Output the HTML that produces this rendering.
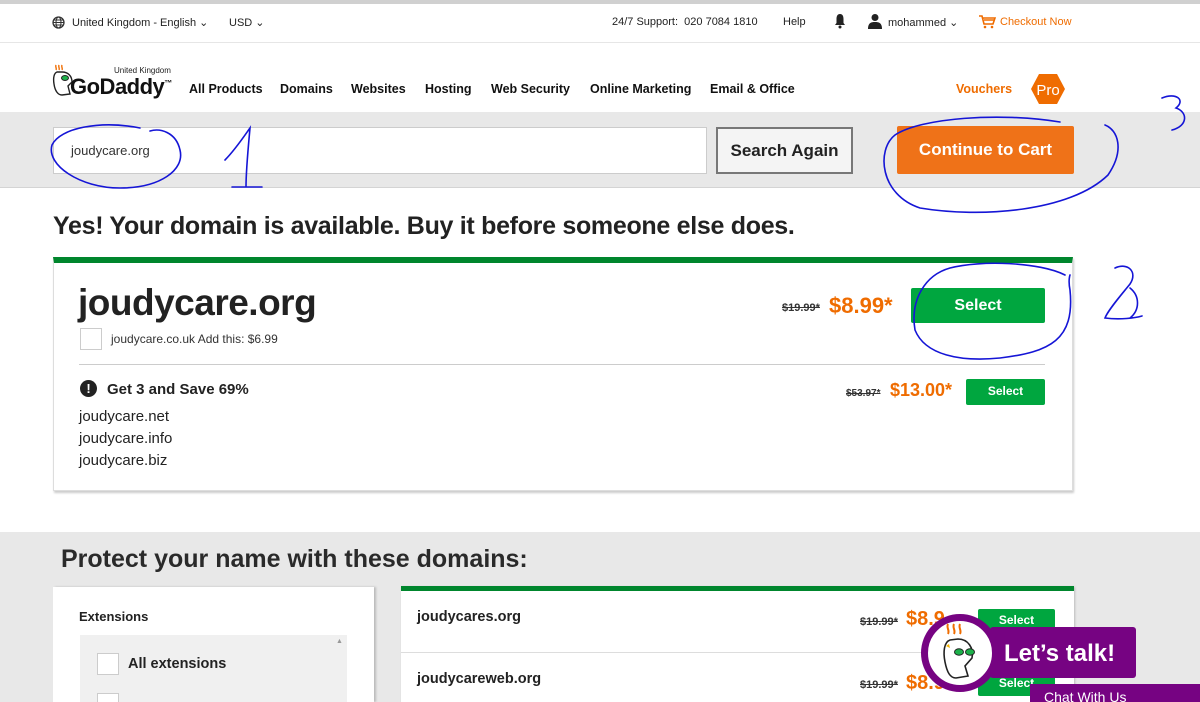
<!DOCTYPE html>
<html><head><meta charset="utf-8"><style>
*{margin:0;padding:0;box-sizing:border-box}
html,body{width:1200px;height:702px;overflow:hidden}
body{background:#fff;font-family:"Liberation Sans",Arial,sans-serif;color:#111;position:relative}
.a{position:absolute}
.b{font-weight:bold}
.btn{background:#00a63f;color:#fff;font-weight:bold;text-align:center;border-radius:2px}
.strike{text-decoration:line-through;font-weight:bold;color:#333}
.price{color:#ef6c00;font-weight:bold}
</style></head><body>
<div class="a" style="left:0;top:0;width:1200px;height:4px;background:#d0d0d0"></div>
<div class="a" style="left:0;top:42px;width:1200px;height:1px;background:#e6e6e6"></div>
<svg class="a" style="left:52px;top:16px" width="13" height="13" viewBox="0 0 13 13"><circle cx="6.5" cy="6.5" r="5.5" fill="none" stroke="#333" stroke-width="1.3"/><ellipse cx="6.5" cy="6.5" rx="2.5" ry="5.5" fill="none" stroke="#333" stroke-width="1"/><path d="M1 6.5H12M2 4H11M2 9H11" stroke="#333" stroke-width="1"/></svg>
<div class="a" style="left:72px;top:16px;font-size:11px;color:#222">United Kingdom - English ⌄</div>
<div class="a" style="left:229px;top:16px;font-size:11px;color:#222">USD ⌄</div>
<div class="a" style="left:612px;top:16px;font-size:11px;color:#222">24/7 Support:&nbsp; 020 7084 1810</div>
<div class="a" style="left:783px;top:16px;font-size:11px;color:#222">Help</div>
<svg class="a" style="left:834px;top:13px" width="12" height="16" viewBox="0 0 12 16"><path d="M6 1C3 1 2.5 4 2.5 6V10L1 12H11L9.5 10V6C9.5 4 9 1 6 1Z" fill="#222"/><circle cx="6" cy="14" r="1.5" fill="#222"/></svg>
<svg class="a" style="left:868px;top:13px" width="14" height="16" viewBox="0 0 14 16"><circle cx="7" cy="4.5" r="3.5" fill="#222"/><path d="M0 16C0 10 3 9 7 9S14 10 14 16Z" fill="#222"/></svg>
<div class="a" style="left:888px;top:16px;font-size:11px;color:#222">mohammed ⌄</div>
<svg class="a" style="left:979px;top:15px" width="17" height="14" viewBox="0 0 17 14"><path d="M0 1H3L5 9H14L16 3H4" fill="none" stroke="#ef6c00" stroke-width="1.6"/><path d="M5 5H15" stroke="#ef6c00" stroke-width="1.5"/><circle cx="6" cy="12" r="1.3" fill="#ef6c00"/><circle cx="13" cy="12" r="1.3" fill="#ef6c00"/></svg>
<div class="a" style="left:1000px;top:16px;font-size:11px;color:#ef6c00">Checkout Now</div>
<div class="a" style="left:114px;top:66px;font-size:8px;color:#222">United Kingdom</div>
<svg class="a" style="left:52px;top:64px" width="22" height="34" viewBox="0 0 22 34"><path d="M4 1C3 3 5 4 4 6M7 1C6 3 8 4 7 6M10 1C9 3 11 4 10 6" stroke="#ef6c00" stroke-width="1.4" fill="none"/><path d="M5 8C2 9 1 14 2 20C3 27 6 31 10 31L18 30L16 22L20 18C20 12 16 8 10 8Z" fill="#fff" stroke="#222" stroke-width="1.4"/><ellipse cx="13" cy="14" rx="3.5" ry="2.5" fill="#1db14b" stroke="#222"/></svg>
<div class="a b" style="left:70px;top:74px;font-size:22px;color:#111;letter-spacing:-0.5px">GoDaddy<sup style="font-size:8px">™</sup></div>
<div class="a b" style="left:189px;top:82px;font-size:12.5px">All Products</div>
<div class="a b" style="left:280px;top:82px;font-size:12.5px">Domains</div>
<div class="a b" style="left:351px;top:82px;font-size:12.5px">Websites</div>
<div class="a b" style="left:425px;top:82px;font-size:12.5px">Hosting</div>
<div class="a b" style="left:491px;top:82px;font-size:12.5px">Web Security</div>
<div class="a b" style="left:590px;top:82px;font-size:12.5px">Online Marketing</div>
<div class="a b" style="left:710px;top:82px;font-size:12.5px">Email &amp; Office</div>
<div class="a b" style="left:956px;top:82px;font-size:12.5px;color:#ef6c00">Vouchers</div>
<svg class="a" style="left:1030px;top:73px" width="36" height="32" viewBox="0 0 36 32"><path d="M9 1H27L35 16L27 31H9L1 16Z" fill="#ef6c00"/><text x="18" y="22" font-family="Liberation Sans" font-size="15" fill="#fff" text-anchor="middle">Pro</text></svg>
<div class="a" style="left:0;top:112px;width:1200px;height:76px;background:#e8e8e8;border-bottom:1px solid #d4d4d4"></div>
<div class="a" style="left:53px;top:127px;width:654px;height:47px;background:#fff;border:1px solid #ccc"></div>
<div class="a" style="left:71px;top:143px;font-size:13px;color:#333">joudycare.org</div>
<div class="a b" style="left:716px;top:127px;width:137px;height:47px;border:2px solid #777;background:#f4f4f4;font-size:17px;line-height:43px;text-align:center;color:#222">Search Again</div>
<div class="a b" style="left:897px;top:126px;width:177px;height:48px;background:#ef7218;color:#fff;font-size:17px;line-height:48px;text-align:center;border-radius:2px">Continue to Cart</div>
<div class="a b" style="left:53px;top:212px;font-size:25px;color:#222;letter-spacing:-0.3px">Yes! Your domain is available. Buy it before someone else does.</div>
<div class="a" style="left:53px;top:257px;width:1020px;height:234px;background:#fff;border:1px solid #ddd;border-top:6px solid #00862d;box-shadow:1px 2px 2px #ccc"></div>
<div class="a b" style="left:78px;top:282px;font-size:37px;color:#222;letter-spacing:-0.5px">joudycare.org</div>
<div class="a" style="left:80px;top:328px;width:22px;height:22px;border:1px solid #ccc"></div>
<div class="a" style="left:111px;top:332px;font-size:12px;color:#333">joudycare.co.uk Add this: $6.99</div>
<div class="a strike" style="left:782px;top:302px;font-size:11px">$19.99*</div>
<div class="a price" style="left:829px;top:293px;font-size:22px">$8.99*</div>
<div class="a btn" style="left:911px;top:288px;width:134px;height:35px;line-height:35px;font-size:16px">Select</div>
<div class="a" style="left:79px;top:364px;width:966px;height:1px;background:#ccc"></div>
<div class="a" style="left:80px;top:380px;width:17px;height:17px;border-radius:50%;background:#222;color:#fff;font-size:13px;font-weight:bold;text-align:center;line-height:17px">!</div>
<div class="a b" style="left:107px;top:381px;font-size:15px;color:#222">Get 3 and Save 69%</div>
<div class="a" style="left:79px;top:406px;font-size:15px;color:#222;line-height:22px">joudycare.net<br>joudycare.info<br>joudycare.biz</div>
<div class="a strike" style="left:846px;top:388px;font-size:10px">$53.97*</div>
<div class="a price" style="left:890px;top:380px;font-size:18px">$13.00*</div>
<div class="a btn" style="left:966px;top:379px;width:79px;height:26px;line-height:24px;font-size:12px">Select</div>
<div class="a" style="left:0;top:532px;width:1200px;height:170px;background:#e8e8e8"></div>
<div class="a b" style="left:61px;top:545px;font-size:25px;color:#2a2a2a">Protect your name with these domains:</div>
<div class="a" style="left:53px;top:587px;width:321px;height:115px;background:#fff;box-shadow:2px 0 2px #bbb"></div>
<div class="a b" style="left:79px;top:609px;font-size:13px;color:#222">Extensions</div>
<div class="a" style="left:80px;top:635px;width:267px;height:67px;background:#f0f0f0"></div>
<div class="a" style="left:336px;top:638px;font-size:7px;color:#999">▲</div>
<div class="a" style="left:97px;top:653px;width:22px;height:22px;border:1px solid #ccc;background:#fff"></div>
<div class="a b" style="left:128px;top:656px;font-size:14.5px;color:#222">All extensions</div>
<div class="a" style="left:97px;top:693px;width:22px;height:9px;border:1px solid #ccc;border-bottom:none;background:#fff"></div>
<div class="a" style="left:401px;top:586px;width:673px;height:116px;background:#fff;border-top:5px solid #00862d;box-shadow:1px 1px 2px #bbb"></div>
<div class="a b" style="left:417px;top:609px;font-size:14.5px;color:#222">joudycares.org</div>
<div class="a" style="left:401px;top:652px;width:673px;height:1px;background:#ddd"></div>
<div class="a b" style="left:417px;top:671px;font-size:14.5px;color:#222">joudycareweb.org</div>
<div class="a strike" style="left:860px;top:616px;font-size:11px">$19.99*</div>
<div class="a price" style="left:906px;top:608px;font-size:20px">$8.9</div>
<div class="a strike" style="left:860px;top:679px;font-size:11px">$19.99*</div>
<div class="a price" style="left:906px;top:672px;font-size:20px">$8.9</div>
<div class="a btn" style="left:978px;top:609px;width:77px;height:24px;font-size:12px;line-height:22px">Select</div>
<div class="a btn" style="left:978px;top:672px;width:77px;height:24px;font-size:12px;line-height:22px">Select</div>
<div class="a" style="left:990px;top:627px;width:146px;height:51px;background:#760382;border-radius:3px"></div>
<div class="a b" style="left:1004px;top:640px;font-size:24px;color:#fff">Let’s talk!</div>
<div class="a" style="left:1030px;top:684px;width:170px;height:18px;background:#760382;overflow:hidden"><div style="padding:5px 0 0 14px;font-size:14px;color:#fff">Chat With Us</div></div>
<div class="a" style="left:921px;top:614px;width:78px;height:78px;border-radius:50%;background:#fff;border:7px solid #760382"></div>
<svg class="a" style="left:938px;top:622px" width="46" height="62" viewBox="0 0 46 62"><path d="M10 2C8 6 12 8 10 12M16 2C14 6 18 8 16 12M22 2C20 6 24 8 22 12" stroke="#ef6c00" stroke-width="2" fill="none"/><path d="M12 18C6 20 5 30 7 40C9 50 12 56 18 56L30 54L27 44L34 36C36 26 30 17 20 17Z" fill="#fff" stroke="#222" stroke-width="1.6"/><ellipse cx="21" cy="30" rx="4.5" ry="3.2" fill="#1db14b" stroke="#222"/><ellipse cx="32" cy="30" rx="4.5" ry="3.2" fill="#1db14b" stroke="#222"/><path d="M8 24L11 22L12 26Z" fill="#f5b400"/></svg>
<svg class="a" style="left:0;top:0" width="1200" height="702" viewBox="0 0 1200 702" fill="none" stroke="#1515d6" stroke-width="1.6" stroke-linecap="round">
<path d="M140 128C100 120 60 128 52 145C46 165 80 188 120 188C160 188 185 170 180 150C176 132 160 128 150 131"/>
<path d="M225 160C235 150 245 135 250 128C248 150 246 170 246 187M232 187H262"/>
<path d="M1060 122C1000 112 920 118 895 135C876 150 880 195 920 208C980 218 1070 212 1108 175C1125 150 1118 130 1105 125"/>
<path d="M1162 98C1176 92 1186 100 1176 108C1188 112 1188 126 1172 130"/>
<path d="M1065 275C1040 262 980 260 950 268C925 275 910 300 915 330C925 355 960 362 1000 358C1050 352 1075 340 1070 290C1068 280 1070 275 1070 275"/>
<path d="M1115 268C1128 262 1138 272 1130 284C1122 294 1108 310 1105 318C1120 320 1135 318 1142 316M1130 288C1140 296 1140 310 1130 318"/>
</svg>
</body></html>
